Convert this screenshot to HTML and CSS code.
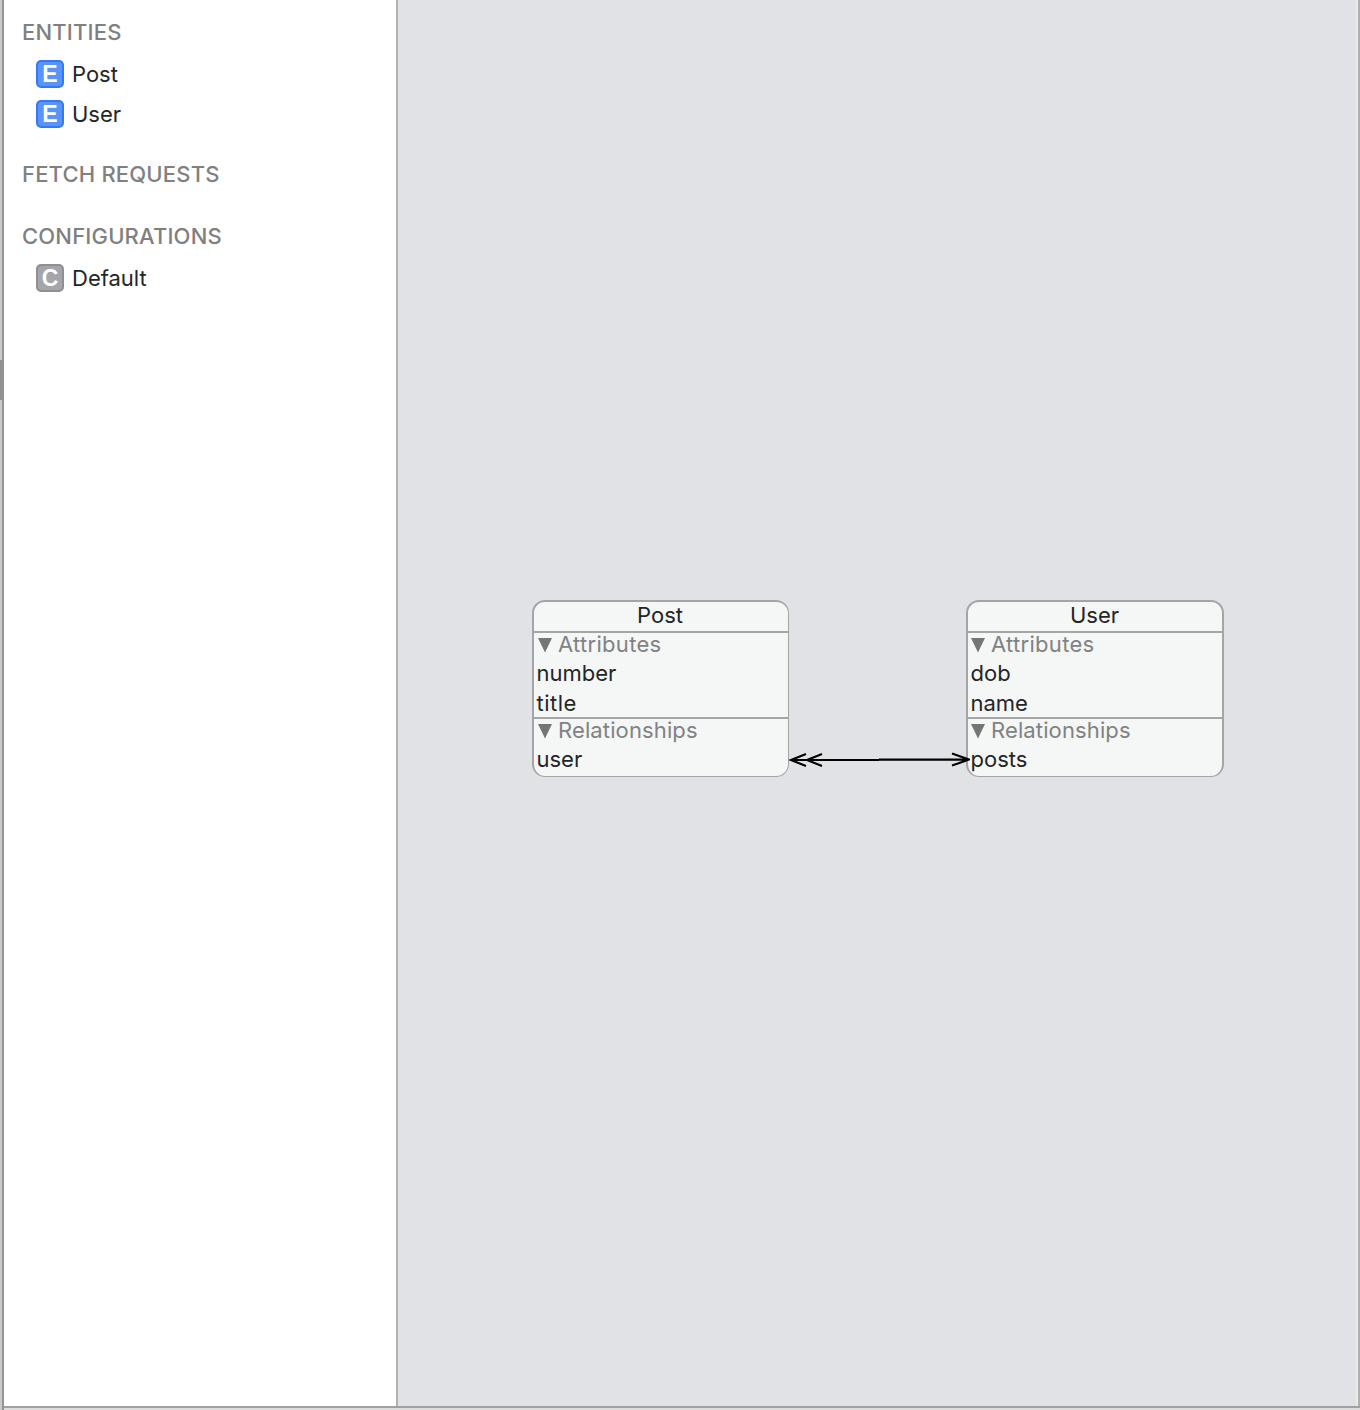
FILE: index.html
```html
<!DOCTYPE html>
<html lang="en">
<head>
<meta charset="utf-8">
<title>Data Model</title>
<link rel="stylesheet" href="styles.css">
</head>
<body>
<div class="window">
  <div class="gutter"><div class="gutter-thumb"></div></div>
  <aside class="sidebar">
    <section class="group">
      <h2>ENTITIES</h2>
      <div class="item"><span class="badge entity">E</span><span>Post</span></div>
      <div class="item"><span class="badge entity">E</span><span>User</span></div>
    </section>
    <section class="group"><h2>FETCH REQUESTS</h2></section>
    <section class="group">
      <h2>CONFIGURATIONS</h2>
      <div class="item"><span class="badge configuration">C</span><span>Default</span></div>
    </section>
  </aside>
  <main class="canvas">
    <article class="node node-post">
      <h3>Post</h3>
      <div class="part attributes">
        <div class="part-title"><svg width="14" height="15" viewBox="0 0 14 15"><path d="M0 0H14L7 14.5Z"/></svg><span class="attributes-label">Attributes</span></div>
        <div class="field">number</div>
        <div class="field title-field">title</div>
      </div>
      <div class="part">
        <div class="part-title"><svg width="14" height="15" viewBox="0 0 14 15"><path d="M0 0H14L7 14.5Z"/></svg><span>Relationships</span></div>
        <div class="field">user</div>
      </div>
    </article>
    <article class="node node-user">
      <h3>User</h3>
      <div class="part attributes">
        <div class="part-title"><svg width="14" height="15" viewBox="0 0 14 15"><path d="M0 0H14L7 14.5Z"/></svg><span class="attributes-label">Attributes</span></div>
        <div class="field">dob</div>
        <div class="field">name</div>
      </div>
      <div class="part">
        <div class="part-title"><svg width="14" height="15" viewBox="0 0 14 15"><path d="M0 0H14L7 14.5Z"/></svg><span>Relationships</span></div>
        <div class="field">posts</div>
      </div>
    </article>
    <svg class="link" width="184" height="20" viewBox="0 0 184 20">
      <path d="M5 10H93M93 9.6H183M20 4L5 10L20 16M36 4L21 10L36 16M166 3.6L183 9.6L166 15.6"/>
    </svg>
  </main>
</div>
<div class="footer"></div>
</body>
</html>
```

FILE: styles.css
```css
* { box-sizing: border-box; }

body {
  margin: 0;
  height: 1410px;
  display: flex;
  flex-direction: column;
  overflow: hidden;
  background: #fff;
  color: #242526;
  font: 22px/30px Inter, "Liberation Sans", sans-serif;
}

h2, h3 { margin: 0; font-size: 22px; }

.window { height: 1406px; display: flex; }

.gutter {
  width: 4px;
  height: 1410px;
  padding-top: 360px;
  background: #c8c9c8;
  border-right: 2px solid #949494;
}
.gutter-thumb { height: 40px; background: #8e9192; }

.sidebar {
  width: 394px;
  padding-top: 10px;
  display: flex;
  flex-direction: column;
  gap: 18px;
  border-right: 2px solid #b1b1b1;
}
.sidebar h2 {
  height: 44px;
  padding-left: 18px;
  line-height: 45px;
  font-weight: 500;
  letter-spacing: 0.18px;
  color: #808080;
  white-space: nowrap;
}
.item {
  height: 40px;
  padding-left: 32px;
  display: flex;
  align-items: center;
  gap: 8px;
}
.badge {
  width: 28px;
  height: 28px;
  border: 2px solid;
  border-radius: 5px;
  color: #fff;
  font-family: "Liberation Sans", sans-serif;
  font-size: 23px;
  font-weight: 700;
  line-height: 25px;
  text-align: center;
}
.entity { background: #5b94f9; border-color: #2f7bf6; }
.configuration { background: #a5a5aa; border-color: #8e8e93; }

.canvas {
  position: relative;
  flex: 1;
  background: #e1e2e5;
  border-right: 2px solid #b0b0b0;
  box-shadow: inset -2px 0 #ebebec;
}

.node {
  position: absolute;
  top: 600px;
  height: 177px;
  border: 2px solid #a4a5a5;
  border-bottom-width: 1.5px;
  border-radius: 13px;
  background: #f5f6f6;
}
.node-post { left: 134px; width: 257px; border-right-width: 1px; }
.node-user { left: 568px; width: 258px; }
.node h3 {
  height: 29px;
  padding-right: 1px;
  line-height: 26px;
  font-weight: 400;
  text-align: center;
}
.node-post h3 { padding-right: 2px; }
.part { border-top: 2px solid #a4a5a5; }
.attributes { height: 86px; }
.part-title {
  height: 25px;
  padding-left: 4px;
  display: flex;
  align-items: center;
  gap: 6px;
  letter-spacing: 0.12px;
  color: #808283;
}
.node-user .part-title { padding-left: 3px; }
.part-title span { padding-bottom: 4px; line-height: 26px; }
.part-title .attributes-label { letter-spacing: 0.3px; }
.part-title svg { fill: #747676; }
.field { height: 29.5px; padding-left: 2.5px; line-height: 30px; }
.title-field { letter-spacing: 0.5px; }

.link {
  position: absolute;
  left: 388px;
  top: 750px;
  fill: none;
  stroke: #000;
  stroke-width: 2.1;
}

.footer {
  height: 4px;
  margin-left: 4px;
  background: #dddddd;
  border-top: 2px solid #a1a1a1;
}
```
